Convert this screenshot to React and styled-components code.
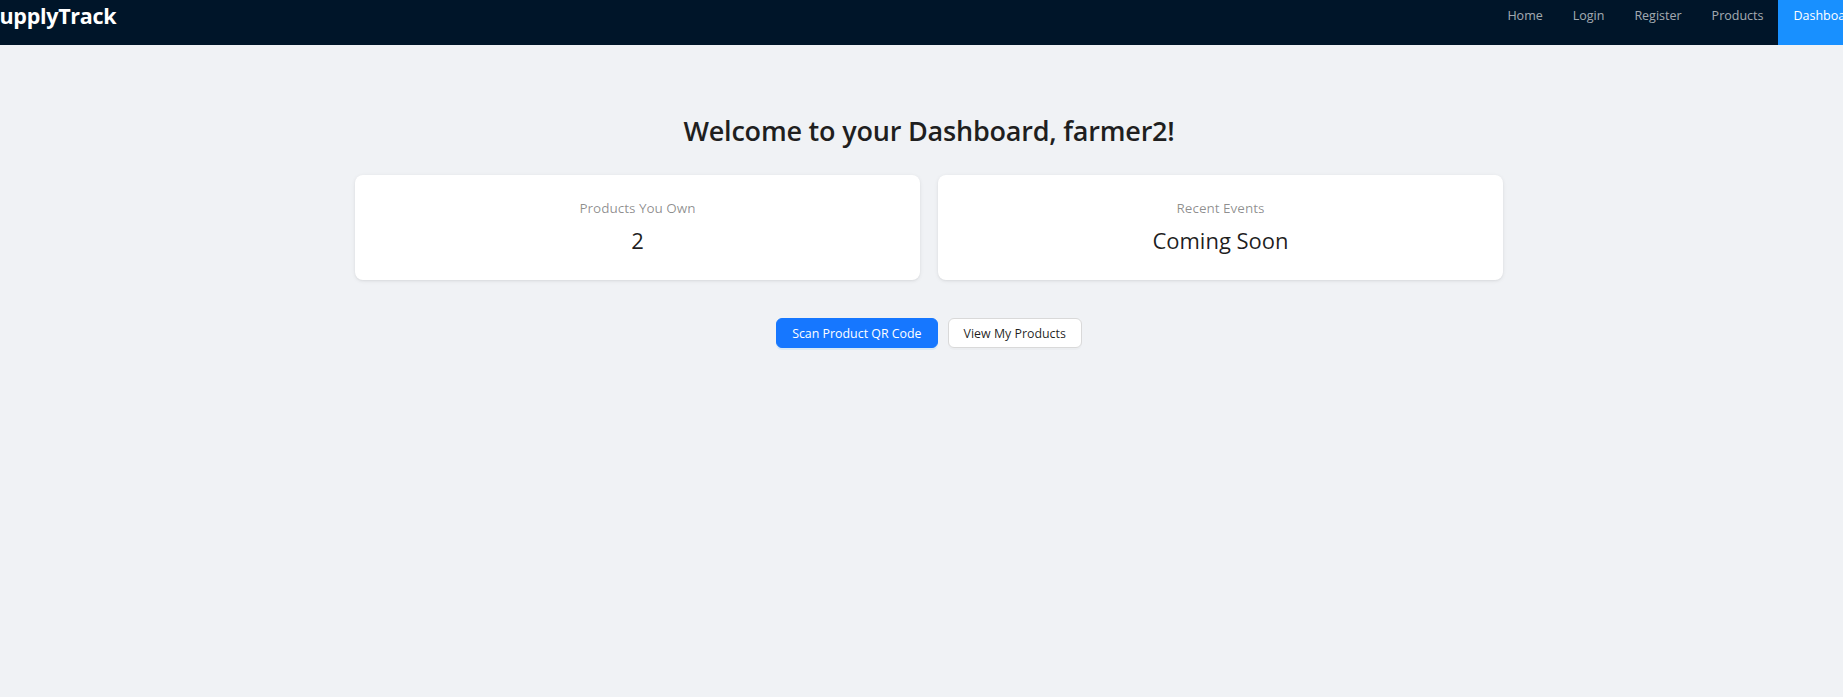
import styled, { createGlobalStyle } from 'styled-components';

const GlobalStyle = createGlobalStyle`
  html, body {
    margin: 0;
    padding: 0;
    background: #f0f2f5;
    overflow: hidden;
  }
  body {
    font-family: "Open Sans", "Noto Sans", sans-serif;
    color: rgba(0, 0, 0, 0.88);
  }
  * {
    box-sizing: border-box;
  }
`;

const navLinks = ['Home', 'Login', 'Register', 'Products', 'Dashboard'];

const stats = [
  { title: 'Products You Own', value: '2' },
  { title: 'Recent Events', value: 'Coming Soon' },
];

const App = () => {
  return (
    <Page>
      <GlobalStyle />
      <Header>
        <Brand>SupplyTrack</Brand>
        <Nav>
          {navLinks.map((link) => (
            <NavLink key={link} $active={link === 'Dashboard'}>
              {link}
            </NavLink>
          ))}
        </Nav>
      </Header>

      <Main>
        <Title>Welcome to your Dashboard, farmer2!</Title>
        <CardGrid>
          {stats.map((stat) => (
            <StatCard key={stat.title}>
              <StatTitle>{stat.title}</StatTitle>
              <StatValue>{stat.value}</StatValue>
            </StatCard>
          ))}
        </CardGrid>
        <Actions>
          <Button $primary>Scan Product QR Code</Button>
          <Button>View My Products</Button>
        </Actions>
      </Main>
    </Page>
  );
};

export default App;

const Page = styled.div`
  min-height: 697px;
  background: #f0f2f5;
`;

const Header = styled.header`
  display: flex;
  justify-content: space-between;
  align-items: flex-start;
  height: 45px;
  background: #001529;
`;

const Brand = styled.div`
  margin-left: -12px;
  line-height: 32px;
  font-size: 21.5px;
  font-weight: 700;
  color: #fff;
  letter-spacing: -0.3px;
`;

const Nav = styled.nav`
  display: flex;
  height: 45px;
  margin-right: -30px;
`;

const NavLink = styled.a`
  display: block;
  height: 45px;
  padding: 0 15px;
  line-height: 32px;
  font-size: 12.5px;
  color: ${(p) => (p.$active ? '#fff' : 'rgba(255, 255, 255, 0.65)')};
  background: ${(p) => (p.$active ? '#1890ff' : 'transparent')};
  cursor: pointer;
`;

const Main = styled.main`
  display: flex;
  flex-direction: column;
  align-items: center;
  padding: 67px 0 0 15px;
`;

const Title = styled.h2`
  margin: 0;
  font-size: 27px;
  line-height: 38px;
  font-weight: 600;
  color: #1f1f1f;
  letter-spacing: -0.2px;
`;

const CardGrid = styled.div`
  display: grid;
  grid-template-columns: 1fr 1fr;
  gap: 18px;
  width: 1148px;
  margin-top: 25px;
`;

const StatCard = styled.div`
  display: flex;
  flex-direction: column;
  align-items: center;
  height: 105px;
  padding-top: 23px;
  background: #fff;
  border-radius: 8px;
  box-shadow: 0 1px 4px rgba(0, 0, 0, 0.08), 0 1px 2px rgba(0, 0, 0, 0.04);
`;

const StatTitle = styled.div`
  font-size: 13.5px;
  line-height: 20px;
  color: rgba(0, 0, 0, 0.45);
`;

const StatValue = styled.div`
  margin-top: 6px;
  font-size: 22px;
  line-height: 32px;
  color: rgba(0, 0, 0, 0.88);
`;

const Actions = styled.div`
  display: flex;
  gap: 10px;
  margin-top: 38px;
`;

const Button = styled.button`
  height: 30px;
  padding: 0 15px;
  font-family: inherit;
  font-size: 12.4px;
  border-radius: 6px;
  border: 1px solid ${(p) => (p.$primary ? '#1677ff' : '#d9d9d9')};
  background: ${(p) => (p.$primary ? '#1677ff' : '#fff')};
  color: ${(p) => (p.$primary ? '#fff' : 'rgba(0, 0, 0, 0.88)')};
  box-shadow: 0 2px 0 ${(p) => (p.$primary ? 'rgba(5, 145, 255, 0.1)' : 'rgba(0, 0, 0, 0.02)')};
  cursor: pointer;
`;
